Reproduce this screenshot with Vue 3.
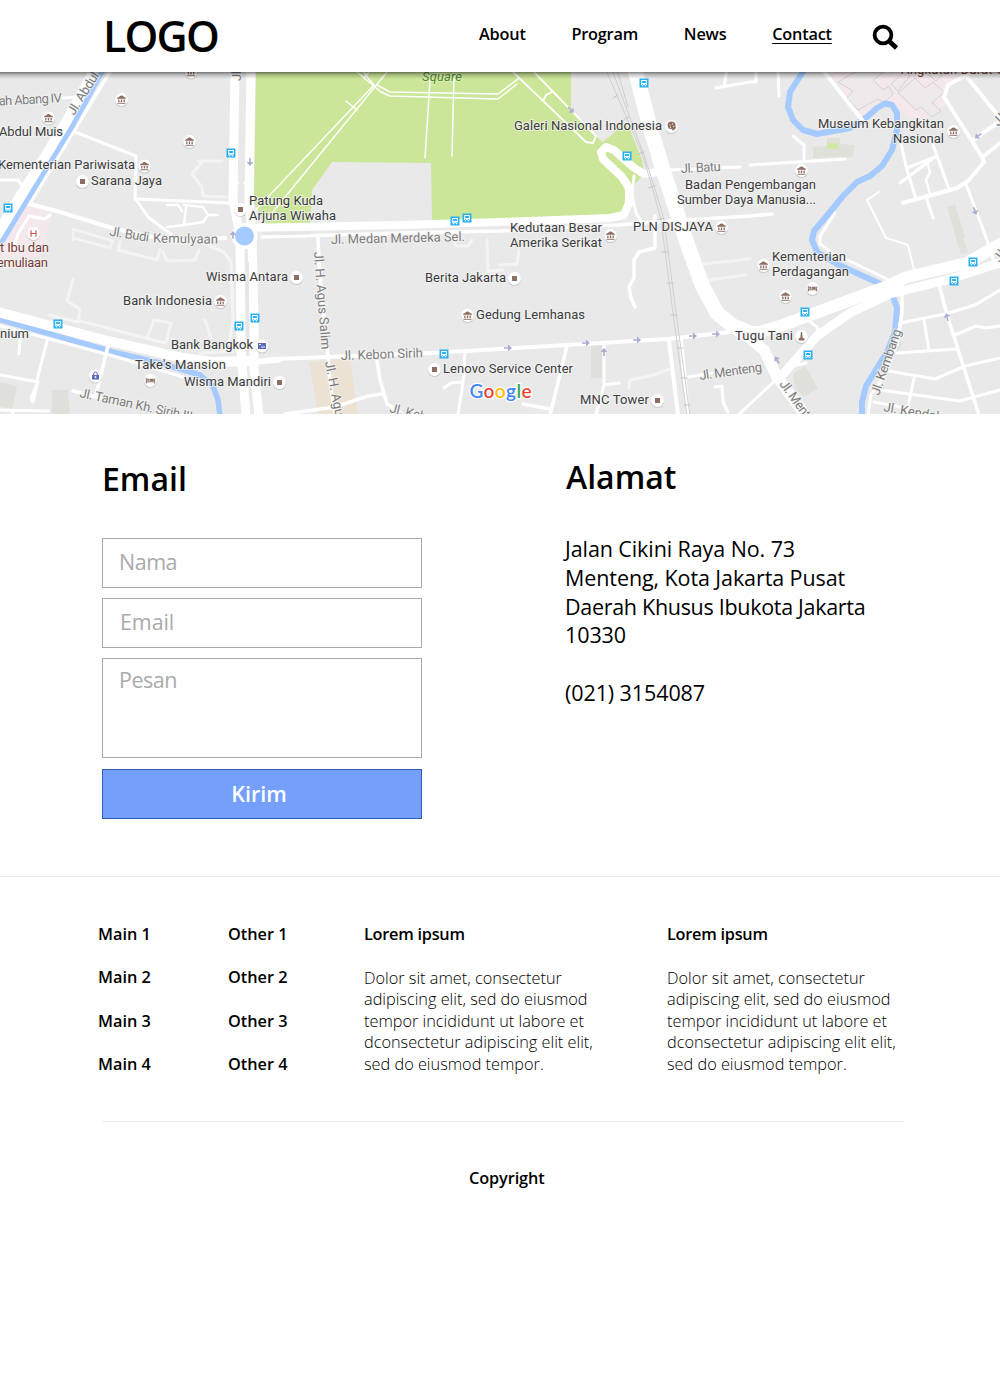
<script setup>
const navItems = ['About', 'Program', 'News', 'Contact']
const mainLinks = ['Main 1', 'Main 2', 'Main 3', 'Main 4']
const otherLinks = ['Other 1', 'Other 2', 'Other 3', 'Other 4']
const loremLines = [
  'Dolor sit amet, consectetur',
  'adipiscing elit, sed do eiusmod',
  'tempor incididunt ut labore et',
  'dconsectetur adipiscing elit elit,',
  'sed do eiusmod tempor.',
]

// Streets: [stroke width, points]
const faintRoads = [
  [3, '198,161 222,161 M203,161 L192,174 L202,187 L203,196 L226,197'],
  [2.5, '73,240 73,229 113,241 110,248 73,238'],
  [3, '120,242 118,250 157,260 160,250 M163,252 L167,261 L195,260 L199,250'],
  [3, '73,279 67,301 80,309 78,322 49,315 M80,321 L165,343'],
  [3, '147,338 154,320 171,323 166,342 M205,320 L211,338 M200,353 L240,351'],
  [3, '205,244 224,252 231,262 233,320 229,344'],
  [3, '453,240 456,246 468,246 472,240 M487,240 L488,271 L503,270 M500,265 L517,264 L519,250'],
  [3, '703,264 750,259 M708,280 L746,275 M629,388 L630,380 L650,376 L670,369'],
]
const roads = [
  [3.5, '111,70 30,203'],
  [3, '75,132 136,156 135,198 148,217 172,235'],
  [3, '135,199 230,203'],
  [4, '22,202 60,212 112,228 170,241 225,238'],
  [3, '0,180 18,180 24,188 M63,98 L78,97'],
  [3, '50,215 45,219 29,216 18,234 14,247'],
  [2.5, '167,205 178,205 182,211 M184,205 L203,207 L208,215 L203,222 L184,225 L167,227 M186,207 L184,225 M208,215 L218,215'],
  [3, '237,183 249,183'],
  [3, '0,326 110,355 183,377'],
  [3, '0,375 38,382 31,398 33,402 37,385 M47,341 L37,380 M20,340 L19,354'],
  [3.5, '108,346 96,395 M73,391 L105,399'],
  [3, '0,410 48,411 M13,410 L12,416'],
  [3.5, '318,238 319,260 322,300 328,358 330,380 335,416'],
  [4, '250,361 275,359 430,353 500,349 667,339 740,331'],
  [3, '250,364 280,361'],
  [3.5, '377,361 380,380 387,404 400,412 M285,414 L335,407 L368,396 L382,394'],
  [3, '465,352 463,382 458,415 M463,382 L451,383 L444,388'],
  [3.5, '567,346 550,415 M523,404 L550,409'],
  [3, '604,343 604,385 596,415 M604,385 L619,383'],
  [4, '669,341 678,415'],
  [4, '681,340 688,415'],
  [3, '688,377 712,373 M715,387 L722,386 L723,402 L728,412 M738,415 L778,378'],
  [3.5, '655,216 655,248 639,252 634,260 634,278 629,287 631,298 635,307'],
  [3.5, '262,237 400,233 500,231 617,225 655,222 750,216 772,214'],
  [3, '634,176 632,195 636,213 641,221'],
  [3, '670,170 740,167 M724,86 L727,70 M716,88 L750,82 L756,82 L756,70'],
  [3, '750,165 845,159 M804,159 L804,145 L793,136'],
  [3, '778,70 779,96'],
  [4, '823,70 850,105 863,121'],
  [3, '900,139 907,170 916,199 M900,183 L935,157 M909,167 L935,157'],
  [3, '933,145 949,189'],
  [4, '903,203 957,188 968,181 984,162 982,157 944,97 948,85 968,74'],
  [4, '966,76 1000,118 M984,156 L1000,143 M972,141 L1000,121'],
  [3, '926,197 933,218 M966,184 L987,240 L994,262'],
  [2.5, '927,162 930,172 926,180 930,194'],
  [2, '879,192 867,200 875,216 886,238 908,245 914,270'],
  [3, '835,213 820,236 820,244 832,253 860,266 887,279'],
  [3.5, '902,280 902,313 897,345'],
  [3, '900,323 945,314 975,305 1000,290'],
  [3.5, '939,284 947,315 979,415'],
  [3, '924,320 929,351 M897,353 L956,349 M888,371 L935,379 L965,366 L1000,358'],
  [3, '880,390 960,401 1000,390 M914,378 L907,412 M874,402 L900,407'],
  [3, '955,335 976,326 986,328 1000,326 M900,324 L895,350'],
  [3, '868,415 871,395 885,375 895,347'],
  [3, '808,320 817,327 820,337 M785,368 L806,363'],
]
const mainRoads = [
  [11, '95,70 64,127 14,207 -8,243'],
  [9, '235,70 233,200 240,236 241,350 246,415'],
  [9, '251,70 249,200 252,236 254,320 254,370 259,415'],
  [10, '-2,312 100,339 183,358 213,362 252,361'],
  [8, '244,228 400,225 500,222 610,218 624,215 629,203 629,188 622,177 603,159 601,152 606,147 614,150 633,167 644,174 658,172'],
  [15, '635,70 650,127 664,173 686,240 702,285 717,313 733,326 750,333'],
  [12, '740,332 760,332 783,325 883,288 907,277 967,263 1002,243'],
  [9, '783,374 817,336 850,313 890,294 950,279 1002,262'],
  [11, '740,331 764,350 777,377 806,416'],
]
const parkPaths = [
  [1.5, '364,72 368,78 374,85 250,216'],
  [1.5, '387,72 268,218'],
  [1.5, '357,72 381,92 390,96 498,99 517,84'],
  [1.5, '369,72 364,78 M377,85 L390,92 L498,94 L518,79 M346,101 L357,110'],
  [1.5, '430,80 425,158 M454,75 L452,156'],
  [1.8, '513,72 586,142 593,143 596,136 534,72'],
  [1.8, '543,101 546,95 552,92'],
]

const museums = [
  [121.5, 99.5], [48.5, 118], [191, 72], [189.5, 141.5], [144.5, 166], [801.5, 170.5], [953.5, 131.5],
  [721.5, 227.5], [610.5, 235.5], [220.5, 301.5], [467.5, 315.5], [763.5, 265.5], [785.5, 296.5],
]
const squares = [[82.5, 181.5], [240.5, 209.5], [296.5, 277.5], [279.5, 382.5], [514.5, 278.5], [434.5, 369.5], [657.5, 400.5]]
const buses = [
  [231, 153], [8, 208], [644, 83], [627, 156], [455, 221], [467, 218], [58, 324], [239, 326], [255, 318],
  [444, 354], [973, 262], [954, 281], [805, 312], [808, 355],
]
const hotels = [[150.5, 380.5], [812.5, 288.5]]
const arrows = [
  [508, 348, 0], [586, 343, 0], [637, 340, 0], [693, 336, 0], [716, 334, 0], [604, 352, -90],
  [571, 110, 45], [978, 136, 145], [975, 211, 70], [777, 360, -120], [947, 317, -105], [250, 162, 90], [233, 235, -90],
]

// Labels: [x, baseline, length, text, kind, angle]
const labels = [
  [-1, 137, 64, 'Abdul Muis'],
  [-2, 170, 137, 'Kementerian Pariwisata'],
  [91, 186, 71, 'Sarana Jaya'],
  [249, 206, 74, 'Patung Kuda'],
  [249, 221, 87, 'Arjuna Wiwaha'],
  [514, 131, 148, 'Galeri Nasional Indonesia'],
  [818, 129, 126, 'Museum Kebangkitan'],
  [893, 144, 51, 'Nasional'],
  [685, 190, 131, 'Badan Pengembangan'],
  [677, 205, 139, 'Sumber Daya Manusia...'],
  [510, 233, 92, 'Kedutaan Besar'],
  [510, 248, 92, 'Amerika Serikat'],
  [633, 232, 80, 'PLN DISJAYA'],
  [206, 282, 82, 'Wisma Antara'],
  [123, 306, 89, 'Bank Indonesia'],
  [171, 350, 82, 'Bank Bangkok'],
  [135, 370, 91, "Take's Mansion"],
  [184, 387, 87, 'Wisma Mandiri'],
  [0, 339, 29, 'nium'],
  [425, 283, 81, 'Berita Jakarta'],
  [476, 320, 109, 'Gedung Lemhanas'],
  [443, 374, 130, 'Lenovo Service Center'],
  [580, 405, 69, 'MNC Tower'],
  [772, 262, 74, 'Kementerian'],
  [772, 277, 77, 'Perdagangan'],
  [735, 341, 58, 'Tugu Tani'],
  [0, 253, 49, 't Ibu dan', 'medical'],
  [-3, 268, 51, 'emuliaan', 'medical'],
  [901, 74.5, 104, 'Angkatan Darat G', 'medical'],
  [422, 82, 40, 'Square', 'park'],
  [-1, 106.5, 63, 'ah Abang IV', 'street', -3],
  [74, 117, 62, 'Jl. Abdul M', 'street', -58],
  [109, 236.5, 40, 'Jl. Budi', 'street', 9],
  [153, 243.5, 65, 'Kemulyaan', 'street', 1],
  [331, 245, 134, 'Jl. Medan Merdeka Sel.', 'street', -1.3],
  [341, 361, 82, 'Jl. Kebon Sirih', 'street', -2],
  [314, 253, 98, 'Jl. H. Agus Salim', 'street', 85.5],
  [325, 363, 98, 'Jl. H. Agus Salim', 'street', 79],
  [681, 174, 40, 'Jl. Batu', 'street', -3],
  [700, 381, 63, 'Jl. Menteng', 'street', -8],
  [779, 385, 63, 'Jl. Menteng', 'street', 54],
  [879, 397, 69, 'Jl. Kembang', 'street', -71],
  [883, 412, 56, 'Jl. Kendal', 'street', 10],
  [79, 398, 115, 'Jl. Taman Kh. Sirih III', 'street', 12],
  [389, 413, 52, 'Jl. Kebon', 'street', 14],
  [241, 82, 36, 'Jl. MH', 'street', -90],
  [1000, 264, 30, 'Jl. K', 'street', -55],
  [998, 128, 30, 'Jl. P', 'street', -45],
]
</script>

<template>
  <div class="page">
    <header class="header">
      <div class="logo">LOGO</div>
      <nav class="nav">
        <a v-for="n in navItems" :key="n" :class="['nav-item', n.toLowerCase()]">{{ n }}</a>
      </nav>
      <svg class="search" width="28" height="28" viewBox="0 0 28 28">
        <circle cx="11" cy="11" r="8.4" fill="none" stroke="#000" stroke-width="3.8" />
        <path d="M17 17 L24.5 24" stroke="#000" stroke-width="4.6" />
      </svg>
    </header>

    <svg class="map" width="1000" height="342" viewBox="0 72 1000 342">
      <defs>
        <linearGradient id="shade" x1="0" y1="0" x2="0" y2="1">
          <stop offset="0" stop-color="#000" stop-opacity=".5" />
          <stop offset=".4" stop-color="#000" stop-opacity=".2" />
          <stop offset="1" stop-color="#000" stop-opacity="0" />
        </linearGradient>
        <g id="disc">
          <circle cy="1" r="6.6" fill="#000" opacity=".13" />
          <circle r="6.4" fill="#fff" />
        </g>
        <g id="museum">
          <use href="#disc" />
          <path d="M-4.5 -1.6 L0 -4.3 L4.5 -1.6 V-.8 H-4.5 Z M-3.3 0 h1.3 v2.6 h-1.3z M-.7 0 h1.4 v2.6 h-1.4z M2 0 h1.3 v2.6 h-1.3z M-4 3.2 h8 v1.1 h-8z" fill="#8d6e63" />
        </g>
        <g id="bus">
          <rect x="-4.5" y="-4.5" width="9" height="9" fill="#29b0f4" />
          <path d="M-2.8 -3 h5.6 v5.2 h-.8 v1 h-1 v-1 h-2 v1 h-1 v-1 h-.8z" fill="#fff" />
          <path d="M-1.9 -2 h3.8 v2 h-3.8z M-1.9 1 h1 v.7 h-1z M.9 1 h1 v.7 h-1z" fill="#29b0f4" />
        </g>
        <g id="hotel">
          <use href="#disc" />
          <path d="M-4.2 -2.5 V3 M4.2 3 V-2 M-4 1.3 H4" stroke="#8d6e63" stroke-width="1" />
          <path d="M-3.2 -1.8 h2.2 v2 h-2.2z M-.4 -1.8 h3.6 v2.2 h-3.6z" fill="#8d6e63" />
        </g>
      </defs>

      <rect y="72" width="1000" height="342" fill="#e9e9e9" />
      <path d="M256 72 H571 V110 L602 142 L612 135 L623 122 L630 130 L642 160 L644 174 L635 184 L627 216 L432 221 L431 163 L332 162 L312 190 L310 224 H267 L254 203Z" fill="#cbe698" />
      <path d="M22 203 L52 213 L40 257 L0 257 V240Z M831 72 H962 L946 88 V105 L925 118 L908 118 L892 100 L868 112 L860 118Z" fill="#f5e8ec" />
      <g fill="#eee9ea" stroke="#d4cdd0" stroke-width=".9">
        <path d="M838 82 L855 72 H884 L873 80 L883 90 L889 86 L893 94 L884 103 L878 99 L858 110 L847 98 L853 91Z" />
        <path d="M898 93 L915 78 L925 88 L933 82 L944 92 L932 103 L941 111 L932 117 L921 107 L916 110Z M904 72 L891 84 L898 91 L913 72Z M925 72 L936 81 L946 72Z" />
      </g>
      <path d="M813 147 L827 146 V138 H840 V144 L855 145 L852 157 L813 158Z M793 374 L805 366 L818 388 L804 397 L795 388Z M591 345 H602 V378 H591Z M947 207 L955 204 L965 237 L957 240Z M960 230 L968 252 L961 254 L954 232Z M52 390 H68 L70 414 H52Z M0 382 L17 386 L12 410 L0 406Z M897 331 L902 345 L897 352Z" fill="#e0e0da" />
      <path d="M827 143 H838 V149 H827Z" fill="#cfe9a5" />
      <path d="M309 362 L350 358 L358 414 H318Z" fill="#ece2d3" />

      <g fill="none" stroke-linejoin="round" stroke-linecap="round">
        <path v-for="(r, i) in faintRoads" :key="'f' + i" :d="'M' + r[1]" stroke="#f4f4f4" :stroke-width="r[0]" />
        <path d="M-2 319 L113 352 L160 363 L200 375 L213 386 L218 400 L220 416" stroke="#a4caff" stroke-width="5.5" />
        <path d="M804 70 L790 92 L788 107 L793 120 L803 130 L817 134 L850 128 L867 117 L877 108 L885 103.500 L892 105 L897 113 L897 130 L892 150 L882 166 L870 176 L857 182 L843 196 L830 212 L814 231 L812 240 L817 252 L837 264 L863 276 L883 285 L893 297 L897 308 L895 332 L887 352 L866 386 L862 402 V416" stroke="#a4caff" stroke-width="6" />
        <path v-for="(r, i) in roads" :key="'r' + i" :d="'M' + r[1]" stroke="#fff" :stroke-width="r[0]" />
        <path v-for="(r, i) in mainRoads" :key="'m' + i" :d="'M' + r[1]" stroke="#fff" :stroke-width="r[0]" />
        <path v-for="(r, i) in parkPaths" :key="'p' + i" :d="'M' + r[1]" stroke="#fff" :stroke-width="r[0]" />
        <path d="M103 70 L72 127 L23 207 L3 240 L-3 248" stroke="#a4caff" stroke-width="5" />
        <path d="M242.500 70 L241 203" stroke="#e9e9e9" stroke-width="5" stroke-linecap="butt" />
        <path d="M262 233.500 L311 233 M247.500 262 V352" stroke="#e6e6e6" stroke-width="3" stroke-linecap="butt" />
        <path d="M606 70 L642 153 L653 190 L661 220 L674 320 L687 416 M612 70 L626 107 L645 158 L656 192 L664 220 L677 320 L690 416 M617 70 L628 107" stroke="#cfcfcf" stroke-width="1" />
        <path d="M613 98 l5 -3 M623 120 l6 -3 M638 154 l6 -2 M648 188 l7 -2 M657 220 l7 -2 M662 252 h6 M667 283 h6 M671 315 h6 M677 348 h6 M681 378 h6 M684 405 h6" stroke="#c6c6c6" stroke-width="1" />
      </g>
      <circle cx="244.500" cy="236" r="13" fill="#fff" />
      <circle cx="244.500" cy="236" r="9.500" fill="#a4caff" />

      <g v-for="(a, i) in arrows" :key="'a' + i" :transform="`translate(${a[0]} ${a[1]}) rotate(${a[2]})`">
        <path d="M-4 -.8 H0 V-3.400 L4 0 L0 3.400 V.8 H-4Z" fill="#a9aed0" />
      </g>

      <text
        v-for="(l, i) in labels"
        :key="'l' + i"
        :class="['label', l[4]]"
        :transform="`translate(${l[0]} ${l[1] - 1}) rotate(${l[5] || 0})`"
        :textLength="l[2]"
      >{{ l[3] }}</text>

      <use v-for="(p, i) in museums" :key="'mu' + i" href="#museum" :x="p[0]" :y="p[1]" />
      <use v-for="(p, i) in hotels" :key="'h' + i" href="#hotel" :x="p[0]" :y="p[1]" />
      <g v-for="(p, i) in squares" :key="'s' + i" :transform="`translate(${p[0]} ${p[1]})`">
        <use href="#disc" />
        <rect x="-2.500" y="-2.500" width="5" height="5" fill="#8d6e63" />
      </g>
      <use v-for="(p, i) in buses" :key="'b' + i" href="#bus" :x="p[0]" :y="p[1]" />
      <g transform="translate(33.500 233.500)">
        <use href="#disc" />
        <path d="M-2.500 -3.300 V3.300 M2.500 -3.300 V3.300 M-2.500 0 H2.500" stroke="#d0493e" stroke-width="1.100" />
      </g>
      <g transform="translate(671.500 126.500)">
        <use href="#disc" />
        <path d="M-4 -1 A4 4 0 0 1 4 -1 A4 4 0 0 1 1.500 4 L0 2.500 L-3 2Z" fill="#8d6e63" />
        <path d="M-2 -1.500 h1 M.5 -2.500 h1 M1.800 0 h1 M-1.500 .8 h1" stroke="#fff" stroke-width="1" />
      </g>
      <g transform="translate(95.500 376)">
        <use href="#disc" />
        <path d="M-3.500 -1 H3.500 V3.500 H-3.500Z" fill="#5c6bc0" />
        <path d="M-1.800 -1 V-2.300 A1.800 1.600 0 0 1 1.800 -2.300 V-1" fill="none" stroke="#5c6bc0" />
        <circle cy="1" r=".9" fill="#fff" />
      </g>
      <g transform="translate(262 346)">
        <use href="#disc" />
        <rect x="-4" y="-3" width="8" height="6" fill="#5c6bc0" />
        <path d="M-3 -1.500 h2 M-1 1 h4" stroke="#fff" stroke-width=".9" />
      </g>
      <g transform="translate(801.500 336.500)">
        <use href="#disc" />
        <path d="M-.6 -4.500 H.6 L1.200 1.500 H2.800 V4 H-2.800 V1.500 H-1.200Z" fill="#8d6e63" />
      </g>

      <text class="google" x="469.500" y="397.500" textLength="62"><tspan fill="#4285f4">G</tspan><tspan fill="#ea4335">o</tspan><tspan fill="#fbbc05">o</tspan><tspan fill="#4285f4">g</tspan><tspan fill="#34a853">l</tspan><tspan fill="#ea4335">e</tspan></text>
      <rect y="72" width="1000" height="7" fill="url(#shade)" />
    </svg>

    <main class="contact-section">
      <form class="form" @submit.prevent>
        <h2 class="title">Email</h2>
        <input class="field" placeholder="Nama" />
        <input class="field email-field" placeholder="Email" />
        <textarea class="field message" placeholder="Pesan"></textarea>
        <button class="send">Kirim</button>
      </form>
      <section class="address">
        <h2 class="title address-title">Alamat</h2>
        <p class="lines">
          Jalan Cikini Raya No. 73<br />
          Menteng, Kota Jakarta Pusat<br />
          <span class="tight">Daerah Khusus Ibukota Jakarta</span><br />
          10330<br /><br />
          (021) 3154087
        </p>
      </section>
    </main>

    <footer class="footer">
      <div class="footer-columns">
        <ul class="links main-links">
          <li v-for="l in mainLinks" :key="l">{{ l }}</li>
        </ul>
        <ul class="links other-links">
          <li v-for="l in otherLinks" :key="l">{{ l }}</li>
        </ul>
        <section v-for="k in 2" :key="k" class="blurb">
          <h3>Lorem ipsum</h3>
          <p><template v-for="(l, i) in loremLines" :key="i">{{ l }}<br /></template></p>
        </section>
      </div>
      <div class="copyright">Copyright</div>
    </footer>
  </div>
</template>

<style>
body { background: #fff; }
</style>

<style scoped>
.page {
  width: 1000px;
  height: 1400px;
  overflow: hidden;
  background: #fff;
  color: #000;
  font-family: "Open Sans", Lato, sans-serif;
  font-size: 16.3px;
}
.header {
  display: flex;
  height: 72px;
  padding-left: 103px;
  box-sizing: border-box;
}
.logo {
  width: 376px;
  font-size: 43px;
  font-weight: 600;
  line-height: 71px;
  letter-spacing: -1.8px;
}
.nav {
  display: flex;
  gap: 45.8px;
  width: 393px;
  line-height: 69px;
  font-weight: 600;
  letter-spacing: -.2px;
}
.contact { text-decoration: underline; text-decoration-thickness: 1px; text-underline-offset: 3px; }
.search { margin-top: 24px; }
.map { display: block; }
.label {
  font: 13px Roboto, sans-serif;
  fill: #3c3c3c;
  stroke: #f4f4f4;
  stroke-opacity: .75;
  stroke-width: 2px;
  paint-order: stroke;
}
.street { fill: #7c7c7c; }
.park { fill: #4c8a1c; font-style: italic; stroke: #e4f3c8; }
.medical { fill: #7a3b35; }
.google {
  font: 600 19px Lato, sans-serif;
  stroke: #fff;
  stroke-width: 2.5px;
  paint-order: stroke;
}
.contact-section {
  display: flex;
  height: 463px;
  padding-left: 102px;
  box-sizing: border-box;
  border-bottom: 1px solid #ececec;
}
.form {
  display: flex;
  flex-direction: column;
  width: 320px;
  padding-top: 45px;
}
.title {
  margin: 0 0 39px;
  height: 40px;
  font-size: 32px;
  font-weight: 600;
  line-height: 40px;
}
.field {
  box-sizing: border-box;
  width: 320px;
  height: 50px;
  margin: 0 0 10px;
  padding: 0 16px 3px;
  border: 1px solid #aaa;
  border-radius: 0;
  background: #fff;
  font: inherit;
  font-size: 21.5px;
  letter-spacing: -.5px;
  outline: 0;
  resize: none;
}
.field::placeholder { color: #aaa; opacity: 1; }
.email-field { padding-left: 17px; letter-spacing: -.1px; }
.message { height: 100px; margin-bottom: 11px; padding-top: 6px; line-height: 30px; }
.send {
  height: 50px;
  padding: 0 6px 2px 0;
  border: 1px solid #2d5bb5;
  background: #74a0fc;
  color: #fff;
  font: inherit;
  font-size: 21.5px;
  font-weight: 600;
}
.address { margin-left: 143px; padding-top: 43px; }
.address-title { margin: 0 0 38px 1px; }
.lines {
  margin: 0;
  font-size: 21.5px;
  line-height: 28.8px;
  letter-spacing: -.09px;
  white-space: nowrap;
}
.tight { letter-spacing: -.3px; }
.footer { padding: 47px 96px 0 98px; }
.footer-columns { display: flex; height: 197px; }
.links {
  flex: none;
  margin: 0;
  padding: 0;
  list-style: none;
  line-height: 21.6px;
  font-weight: 600;
}
.links li { margin-bottom: 21.7px; }
.main-links { width: 130px; }
.other-links { width: 136px; }
.blurb { width: 303px; flex: none; }
.blurb h3 {
  margin: 0 0 22px;
  font-size: inherit;
  line-height: 21.6px;
  font-weight: 600;
  letter-spacing: -.25px;
}
.blurb p { margin: 0; line-height: 21.5px; font-weight: 300; white-space: nowrap; }
.copyright {
  margin-left: 4px;
  padding: 45px 0 0 367px;
  border-top: 1px solid #ececec;
  line-height: 23px;
  font-weight: 600;
  letter-spacing: -.1px;
}
</style>
